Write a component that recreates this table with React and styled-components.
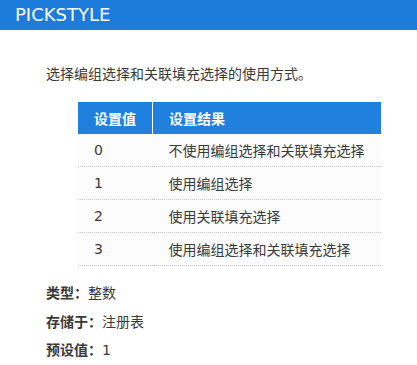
import React from 'react';
import styled, { createGlobalStyle } from 'styled-components';

const GlobalStyle = createGlobalStyle`
    body {
        margin: 0;
        background: #fff;
        font-family: "DejaVu Sans", "Noto Sans CJK SC", sans-serif;
        color: #3a3a3a;
    }
`;

const rows = [
    { value: '0', result: '不使用编组选择和关联填充选择' },
    { value: '1', result: '使用编组选择' },
    { value: '2', result: '使用关联填充选择' },
    { value: '3', result: '使用编组选择和关联填充选择' },
];

const props = [
    { label: '类型：', value: '整数' },
    { label: '存储于：', value: '注册表' },
    { label: '预设值：', value: '1' },
];

const App = () => {
    return (
        <Page>
            <GlobalStyle />
            <TitleBar>PICKSTYLE</TitleBar>
            <Content>
                <Description>选择编组选择和关联填充选择的使用方式。</Description>
                <Table>
                    <thead>
                        <tr>
                            <HeadCell $first>设置值</HeadCell>
                            <HeadCell>设置结果</HeadCell>
                        </tr>
                    </thead>
                    <tbody>
                        {rows.map((row) => (
                            <Row key={row.value}>
                                <Cell>{row.value}</Cell>
                                <Cell>{row.result}</Cell>
                            </Row>
                        ))}
                    </tbody>
                </Table>
                <PropList>
                    {props.map((p) => (
                        <PropItem key={p.label}>
                            <PropLabel>{p.label}</PropLabel>
                            {p.value}
                        </PropItem>
                    ))}
                </PropList>
            </Content>
        </Page>
    );
};

export default App;

const Page = styled.div`
    width: 417px;
    min-height: 365px;
`;

const TitleBar = styled.h1`
    margin: 0;
    height: 30px;
    padding-left: 15px;
    background-color: #1c7bdb;
    color: #fff;
    font-size: 18px;
    font-weight: normal;
    line-height: 30px;
`;

const Content = styled.div`
    padding: 34px 0 0 46px;
`;

const Description = styled.p`
    margin: 0;
    font-size: 14px;
    line-height: 20px;
`;

const Table = styled.table`
    margin: 18px 0 0 32px;
    width: 303px;
    border-collapse: collapse;
    font-size: 14px;
`;

const HeadCell = styled.th`
    height: 32px;
    padding: 0 16px;
    background-color: #1f80de;
    color: #fff;
    font-weight: bold;
    text-align: left;
    width: ${(p) => (p.$first ? '42px' : 'auto')};
    border-left: ${(p) => (p.$first ? 'none' : '1px solid #fff')};
`;

const Row = styled.tr`
    background-color: #fcfcfc;
    border-bottom: 1px dotted #c8c8c8;
`;

const Cell = styled.td`
    height: 32px;
    padding: 0 16px;
    text-align: left;
`;

const PropList = styled.ul`
    list-style: none;
    margin: 13px 0 0;
    padding: 0;
    font-size: 14px;
`;

const PropItem = styled.li`
    line-height: 28.5px;
`;

const PropLabel = styled.span`
    font-weight: bold;
`;
